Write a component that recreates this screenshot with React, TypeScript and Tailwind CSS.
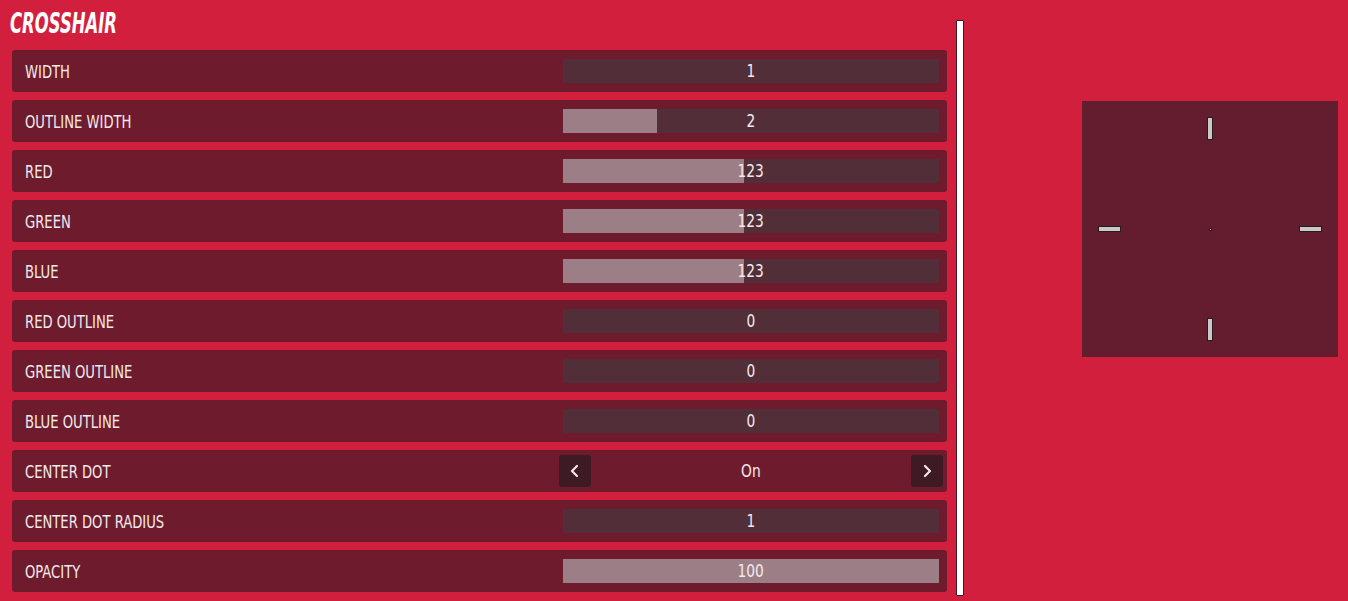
import React from 'react';

type Row =
  | { label: string; kind: 'slider'; value: number; pct: number }
  | { label: string; kind: 'toggle'; value: string };

const rows: Row[] = [
  { label: 'WIDTH', kind: 'slider', value: 1, pct: 0 },
  { label: 'OUTLINE WIDTH', kind: 'slider', value: 2, pct: 25 },
  { label: 'RED', kind: 'slider', value: 123, pct: 48.2 },
  { label: 'GREEN', kind: 'slider', value: 123, pct: 48.2 },
  { label: 'BLUE', kind: 'slider', value: 123, pct: 48.2 },
  { label: 'RED OUTLINE', kind: 'slider', value: 0, pct: 0 },
  { label: 'GREEN OUTLINE', kind: 'slider', value: 0, pct: 0 },
  { label: 'BLUE OUTLINE', kind: 'slider', value: 0, pct: 0 },
  { label: 'CENTER DOT', kind: 'toggle', value: 'On' },
  { label: 'CENTER DOT RADIUS', kind: 'slider', value: 1, pct: 0 },
  { label: 'OPACITY', kind: 'slider', value: 100, pct: 100 },
];

const font = { fontFamily: '"DejaVu Sans Condensed", "Liberation Sans", sans-serif' };

const Chevron = ({ dir }: { dir: 'left' | 'right' }) => (
  <svg width="12" height="14" viewBox="0 0 12 14" fill="none">
    <path
      d={dir === 'left' ? 'M8 2 L3 7 L8 12' : 'M4 2 L9 7 L4 12'}
      stroke="#f1e6e8"
      strokeWidth="2.2"
      strokeLinecap="round"
      strokeLinejoin="round"
    />
  </svg>
);

const Tick = ({ className }: { className: string }) => (
  <div className={`absolute bg-[#c9c9c9] border border-[#2a1a1e] ${className}`} />
);

const App: React.FC = () => {
  return (
    <div className="w-[1348px] h-[601px] bg-[#d31f3e] overflow-hidden flex text-[#f3eaec]" style={font}>
      {/* Settings list */}
      <div className="w-[947px] shrink-0 pl-3 flex flex-col">
        <h1 className="h-[50px] -ml-[2px] pt-[5px] text-[29px] leading-[36px] font-bold italic text-white">
          <span className="inline-block scale-x-[0.63] origin-left">CROSSHAIR</span>
        </h1>
        <div className="flex flex-col gap-2">
          {rows.map((row) => (
            <div key={row.label} className="h-[42px] rounded-[3px] bg-[#6e1c2d] flex items-center pl-[13px]">
              <span className="w-[538px] shrink-0 pt-[3px] text-[17px]">
                <span className="inline-block scale-x-[0.86] origin-left">{row.label}</span>
              </span>
              {row.kind === 'slider' ? (
                <div className="relative w-[376px] shrink-0 h-6 bg-[#522e38] flex items-center justify-center">
                  <div className="absolute left-0 top-0 h-full bg-[#9c7f86]" style={{ width: `${row.pct}%` }} />
                  <span className="relative pt-[2px] text-[17px] inline-block scale-x-[0.9]">{row.value}</span>
                </div>
              ) : (
                <div className="-ml-1 w-[384px] shrink-0 flex items-center justify-between">
                  <button className="w-8 h-8 rounded-[3px] bg-[#3e1a24] flex items-center justify-center">
                    <Chevron dir="left" />
                  </button>
                  <span className="pt-[2px] text-[17px] inline-block scale-x-[0.9]">{row.value}</span>
                  <button className="w-8 h-8 rounded-[3px] bg-[#3e1a24] flex items-center justify-center">
                    <Chevron dir="right" />
                  </button>
                </div>
              )}
            </div>
          ))}
        </div>
      </div>

      {/* Scrollbar */}
      <div className="ml-[9px] mt-5 w-[8px] h-[576px] shrink-0 bg-white border border-[#3a1a22] rounded-[1px]" />

      {/* Preview */}
      <div className="ml-[118px] mt-[101px] shrink-0">
        <div className="relative w-[256px] h-[256px] bg-[#631d2f]">
          <Tick className="left-[125px] top-[16px] w-[6px] h-[23px]" />
          <Tick className="left-[125px] top-[217px] w-[6px] h-[23px]" />
          <Tick className="left-[16px] top-[125px] w-[23px] h-[6px]" />
          <Tick className="left-[217px] top-[125px] w-[23px] h-[6px]" />
          <div className="absolute left-[127px] top-[127px] w-[3px] h-[3px] bg-[#c9c9c9] border border-[#2a1a1e]" />
        </div>
      </div>
    </div>
  );
};

export default App;
